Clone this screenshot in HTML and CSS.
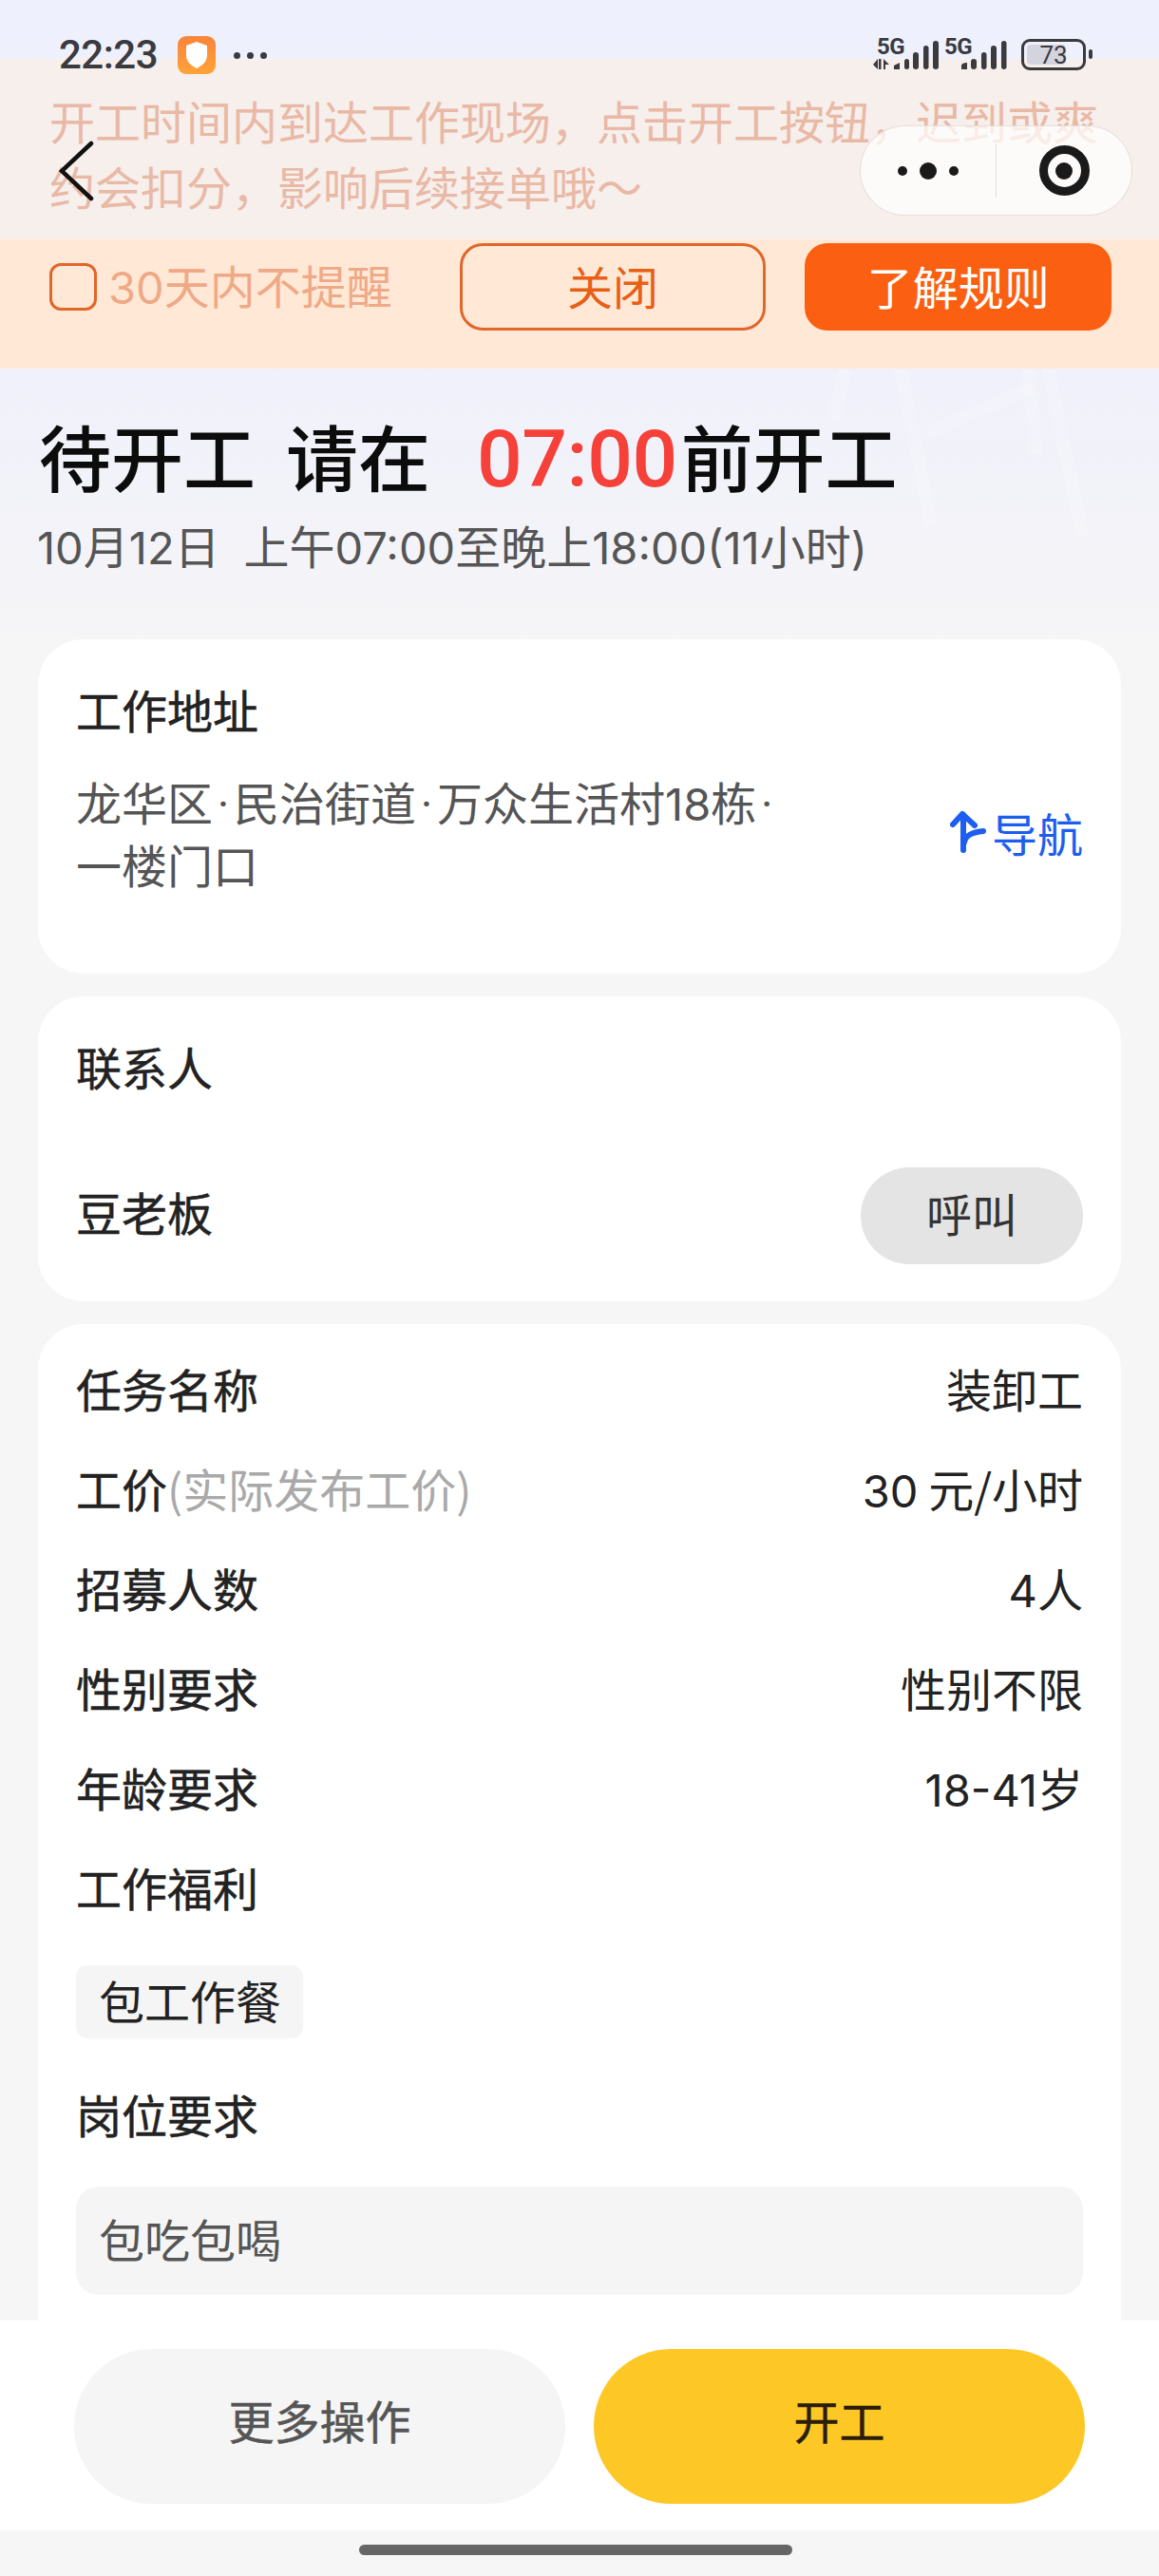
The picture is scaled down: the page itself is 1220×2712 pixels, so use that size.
FILE: index.html
```html
<!DOCTYPE html>
<html lang="zh">
<head>
<meta charset="utf-8">
<title>待开工</title>
<link rel="stylesheet" href="styles.css">
</head>
<body>
<div class="page">
  <svg class="watermark" width="300" height="190" viewBox="0 0 300 190" fill="none" stroke="#fff" stroke-opacity=".2" stroke-width="14">
    <path d="M30 0 L17 55"/><path d="M88 0 L120 165"/><path d="M117 68 L227 20"/><path d="M223 0 L230 90"/><path d="M243 0 L280 178"/>
  </svg>

  <div class="statusbar">
    <div class="status-left">
      <span class="time">22:23</span>
      <svg class="shield" width="40" height="40" viewBox="0 0 40 40">
        <defs><linearGradient id="sg" x1="0" y1="0" x2="0" y2="1"><stop offset="0" stop-color="#f9843a"/><stop offset="1" stop-color="#ffa339"/></linearGradient></defs>
        <rect width="40" height="40" rx="9" fill="url(#sg)"/>
        <path d="M20 6 L31 10 V20 C31 27 26 31 20 34 C14 31 9 27 9 20 V10 Z" fill="#fff"/>
      </svg>
      <span class="more-dots"><i></i><i></i><i></i></span>
    </div>
    <div class="status-right">
      <svg width="240" height="40" viewBox="0 0 240 40" class="signal">
        <g fill="#3a3a3f">
          <path d="M5 24 L0 30 L5 35 Z"/><rect x="6" y="24" width="2.5" height="11"/><path d="M11 24 L17 30 H13 V35 H11 Z"/>
          <path d="M22 35 V31 L28 28 V35 Z"/>
          <rect x="33" y="24" width="5" height="11" rx="2.5"/>
          <rect x="42" y="17" width="6" height="18" rx="3"/>
          <rect x="53" y="10" width="5.5" height="25" rx="2.75"/>
          <rect x="63" y="5" width="6" height="30" rx="3"/>
          <path d="M93 35 V31 C93 29 96 28 99 28 V35 Z"/>
          <rect x="103" y="24" width="6" height="11" rx="3"/>
          <rect x="114" y="17" width="5.5" height="18" rx="2.75"/>
          <rect x="124" y="10" width="6" height="25" rx="3"/>
          <rect x="135" y="5" width="5.5" height="30" rx="2.75"/>
        </g>
      </svg>
      <span class="g5 g5a">5G</span>
      <span class="g5 g5b">5G</span>
      <span class="battery"><span class="battery-fill"></span><span class="battery-num">73</span></span>
      <span class="battery-nub"></span>
    </div>
  </div>

  <svg class="back" width="40" height="64" viewBox="0 0 40 64" fill="none" stroke="#111" stroke-width="4.5" stroke-linecap="round" stroke-linejoin="miter">
    <path d="M34 3 L3 32 L34 61"/>
  </svg>

  <div class="capsule">
    <span class="capsule-part"><i class="d-s"></i><i class="d-l"></i><i class="d-s"></i></span>
    <span class="capsule-line"></span>
    <span class="capsule-part"><span class="target"><i></i></span></span>
  </div>

  <section class="notice">
    <p class="notice-text">开工时间内到达工作现场，点击开工按钮，迟到或爽约会扣分，影响后续接单哦～</p>
  </section>
  <div class="notice-actions">
    <label class="check"><span class="checkbox"></span><span class="check-label"><span class="num">30</span>天内不提醒</span></label>
    <span class="btn btn-outline">关闭</span>
    <span class="btn btn-fill">了解规则</span>
  </div>

  <header class="hero">
    <h1 class="hero-title">待开工<span class="gap"></span>请在<span class="gap gap-wide"></span><span class="hero-time">07:00</span>前开工</h1>
    <p class="hero-sub"><span class="num">10</span>月<span class="num">12</span>日<span class="gap-sub"></span>上午<span class="num">07:00</span>至晚上<span class="num">18:00(11</span>小时<span class="num">)</span></p>
  </header>

  <section class="card card-address">
    <h2 class="card-title">工作地址</h2>
    <div class="address-row">
      <p class="address">龙华区<span class="sep">·</span>民治街道<span class="sep">·</span>万众生活村<span class="num">18</span>栋<span class="sep">·</span><br>一楼门口</p>
      <span class="nav-link">
        <svg width="38" height="46" viewBox="0 0 38 46" fill="none" stroke="#1d5ef0" stroke-width="6" stroke-linecap="round" stroke-linejoin="round">
          <path d="M3 15 L13 4 L26 16"/><path d="M14 5 L14 42"/><path d="M15 34 C16 26 24 23 35 22"/>
        </svg>导航
      </span>
    </div>
  </section>

  <section class="card card-contact">
    <h2 class="card-title">联系人</h2>
    <div class="contact-row">
      <span class="contact-name">豆老板</span>
      <span class="call">呼叫</span>
    </div>
  </section>

  <section class="card card-info">
    <div class="row"><span class="row-label">任务名称</span><span class="row-value">装卸工</span></div>
    <div class="row"><span class="row-label">工价<span class="muted">(实际发布工价)</span></span><span class="row-value"><span class="num">30</span> 元/小时</span></div>
    <div class="row"><span class="row-label">招募人数</span><span class="row-value"><span class="num">4</span>人</span></div>
    <div class="row"><span class="row-label">性别要求</span><span class="row-value">性别不限</span></div>
    <div class="row"><span class="row-label">年龄要求</span><span class="row-value"><span class="num">18-41</span>岁</span></div>
    <div class="row"><span class="row-label">工作福利</span></div>
    <span class="tag">包工作餐</span>
    <div class="row row-req"><span class="row-label">岗位要求</span></div>
    <div class="req-box">包吃包喝</div>
  </section>

  <footer class="bottom">
    <div class="actions">
      <span class="action action-more">更多操作</span>
      <span class="action action-start">开工</span>
    </div>
    <div class="home-area"><span class="home-bar"></span></div>
  </footer>
</div>
</body>
</html>
```
FILE: styles.css
```css
* { box-sizing: border-box; }
html, body { margin: 0; padding: 0; }
body {
  font-family: "Noto Sans CJK SC", "Noto Sans", sans-serif;
  color: #222;
}
.num { font-family: "Inter", sans-serif; font-size: 47px; line-height: 1; }
.page {
  position: relative;
  width: 1220px;
  height: 2712px;
  overflow: hidden;
  padding-top: 62px;
  background: linear-gradient(180deg, #eef1fd 0, #f0f1fa 400px, #f4f4f8 630px, #f6f6f6 680px);
}
.watermark { position: absolute; left: 860px; top: 388px; }

/* status bar */
.statusbar {
  position: absolute; left: 0; top: 0; width: 100%; height: 100px;
  display: flex; justify-content: space-between; z-index: 3;
}
.status-left { position: absolute; left: 62px; top: 38px; display: flex; align-items: center; height: 40px; }
.time { font-family: "Roboto", sans-serif; font-size: 42px; line-height: 40px; color: #3a3a3f; letter-spacing: -0.5px; width: 125px; font-weight: 500; }
.shield { display: block; }
.more-dots { display: flex; gap: 7px; margin-left: 19px; }
.more-dots i { width: 7px; height: 7px; border-radius: 50%; background: #3a3a3f; }
.status-right { position: absolute; left: 919px; top: 38px; width: 240px; height: 40px; }
.signal { position: absolute; left: 0; top: 0; }
.g5 { position: absolute; top: 0; font-family: "Roboto", sans-serif; font-weight: 700; font-size: 24px; line-height: 22px; color: #3a3a3f; letter-spacing: -0.5px; }
.g5a { left: 4px; }
.g5b { left: 75px; }
.battery {
  position: absolute; left: 156px; top: 3px; width: 68px; height: 33px;
  border: 3.5px solid #3a3a3f; border-radius: 9px;
  display: flex; align-items: center; justify-content: center; overflow: hidden;
}
.battery-fill { position: absolute; left: 3px; top: 3px; bottom: 3px; width: 41px; background: #d4d4de; border-radius: 4px; }
.battery-num { position: relative; font-family: "Roboto", sans-serif; font-size: 26px; line-height: 24px; color: #3a3a3f; }
.battery-nub { position: absolute; left: 227px; top: 14px; width: 4px; height: 10px; background: #3a3a3f; border-radius: 2px; }

/* navigation overlay */
.back { position: absolute; left: 62px; top: 148px; z-index: 3; }
.capsule {
  position: absolute; left: 905px; top: 132px; width: 287px; height: 95px; z-index: 3;
  display: flex; align-items: center;
  background: rgba(255, 255, 255, .72);
  border: 1px solid rgba(225, 215, 210, .8);
  border-radius: 48px;
}
.capsule-part { flex: 1; display: flex; align-items: center; justify-content: center; gap: 13px; }
.capsule-line { width: 1px; height: 56px; background: #e3dddb; }
.d-s { width: 10px; height: 10px; border-radius: 50%; background: #1a1a1a; }
.d-l { width: 18px; height: 18px; border-radius: 50%; background: #1a1a1a; }
.target {
  width: 53px; height: 53px; border: 9px solid #1a1a1a; border-radius: 50%;
  display: flex; align-items: center; justify-content: center;
}
.target i { width: 18px; height: 18px; border-radius: 50%; background: #1a1a1a; }

/* notice */
.notice { height: 190px; background: #f6efec; padding: 30px 52px 0; }
.notice-text { margin: 0; font-size: 48px; line-height: 69px; color: #e9b9a6; width: 1116px; }
.notice-actions {
  height: 136px; background: #ffe9d6;
  display: flex; align-items: flex-start; padding: 4px 50px 0 52px;
}
.check { display: flex; align-items: center; height: 92px; width: 432px; }
.checkbox { width: 50px; height: 50px; border: 3px solid #e0662a; border-radius: 12px; }
.check-label { font-size: 48px; color: #efa987; margin-left: 12px; line-height: 1; padding-bottom: 4px; }
.btn {
  height: 92px; width: 323px; border-radius: 24px;
  display: flex; align-items: center; justify-content: center;
  font-size: 48px; padding-bottom: 5px;
}
.btn-outline { border: 3px solid #e0662a; color: #e85f16; margin-right: 41px; }
.btn-fill { background: #fb5f11; color: #fff; }

/* hero */
.hero { padding: 36px 41px 0; height: 285px; }
.hero-title { margin: 0; display: flex; align-items: baseline; font-size: 76px; line-height: 110px; font-weight: 500; color: #0c0c0c; }
.gap { width: 32px; }
.gap-wide { width: 49px; }
.hero-time { font-family: "Roboto", sans-serif; font-size: 84px; font-weight: 500; color: #f5413a; margin-right: 4px; letter-spacing: -0.5px; }
.hero-sub { margin: -1px 0 0 -2px; font-size: 48px; line-height: 70px; color: #555; white-space: nowrap; }
.gap-sub { display: inline-block; width: 25px; }

/* cards */
.card { margin: 0 40px 24px; background: #fff; border-radius: 48px; padding: 0 40px; }
.card-address { height: 352px; padding-top: 41px; }
.card-title { margin: 0; font-size: 48px; line-height: 64px; font-weight: 400; color: #222; -webkit-text-stroke: .5px #222; }
.address-row { display: flex; align-items: center; justify-content: space-between; margin-top: 32px; }
.address { margin: 0; font-size: 48px; line-height: 66px; color: #555; }
.sep { font-family: "Roboto", sans-serif; display: inline-block; width: 22px; text-align: center; line-height: 1; }
.nav-link { display: flex; align-items: center; gap: 6px; font-size: 48px; color: #1d5ef0; }
.card-contact { height: 321px; padding-top: 41px; }
.contact-row { display: flex; align-items: center; justify-content: space-between; margin-top: 75px; }
.contact-name { font-size: 48px; font-weight: 400; color: #222; -webkit-text-stroke: .5px #222; padding-bottom: 10px; }
.call {
  width: 234px; height: 102px; border-radius: 51px; background: #e4e4e4;
  display: flex; align-items: center; justify-content: center;
  font-size: 48px; color: #333; padding-bottom: 8px;
}
.card-info { height: 1200px; padding-top: 14px; border-radius: 48px; }
.row { display: flex; justify-content: space-between; align-items: center; height: 105.1px; font-size: 48px; }
.row-label { font-weight: 400; color: #222; -webkit-text-stroke: .5px #222; }
.row-value { color: #222; }
.muted { color: #a9a9a9; font-weight: 400; -webkit-text-stroke: 0; }
.tag {
  display: inline-block; margin-top: 30px; height: 77px; width: 239px; padding-left: 24px;
  background: #f5f5f5; border-radius: 12px; font-size: 48px; line-height: 73px; color: #222;
}
.row-req { margin-top: 27px; }
.req-box {
  margin-top: 24px; height: 114px; padding-left: 24px; border-radius: 24px;
  background: #f5f5f5; font-size: 48px; line-height: 108px; color: #555;
}

/* bottom */
.bottom { position: absolute; left: 0; bottom: 0; width: 100%; height: 269px; }
.actions { height: 221px; background: #fff; display: flex; gap: 30px; padding: 30px 78px 0; }
.action {
  width: 517px; height: 163px; border-radius: 82px; padding-bottom: 15px;
  display: flex; align-items: center; justify-content: center; font-size: 48px;
}
.action-more { background: #f5f5f5; color: #555; -webkit-text-stroke: .5px #555; }
.action-start { background: #fdc825; color: #2b1d0a; -webkit-text-stroke: .5px #2b1d0a; }
.home-area { height: 48px; background: #f6f6f6; padding: 15px 0 0 378px; }
.home-bar { display: block; width: 456px; height: 11px; border-radius: 6px; background: #666; }
```
